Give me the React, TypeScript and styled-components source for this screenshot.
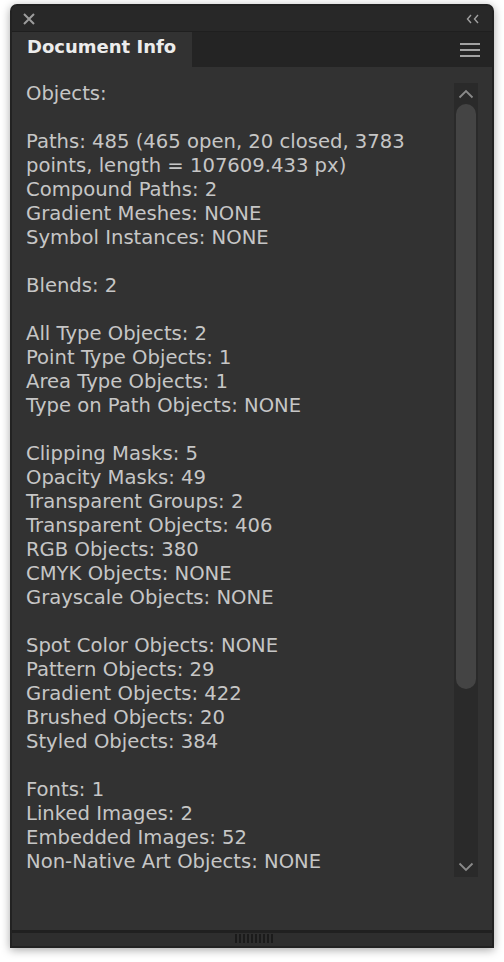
import React from "react";
import styled, { createGlobalStyle } from "styled-components";

const Global = createGlobalStyle`
  html, body { margin: 0; padding: 0; background: #ffffff; }
  #root { width: 504px; height: 962px; }
`;

const Panel = styled.div`
  position: relative;
  margin: 4px 0 0 10px;
  width: 484px;
  height: 944px;
  box-sizing: border-box;
  border: 2px solid #222222;
  border-radius: 7px 7px 0 0;
  background: #323232;
  box-shadow: 0 2px 10px rgba(0, 0, 0, 0.35);
  display: flex;
  flex-direction: column;
  overflow: hidden;
  font-family: "DejaVu Sans", sans-serif;
`;

const TitleBar = styled.div`
  height: 25px;
  background: #282828;
  display: flex;
  align-items: center;
  justify-content: space-between;
  padding: 0 12px 0 10px;
  flex-shrink: 0;
`;

const TabRow = styled.div`
  height: 35px;
  background: #242424;
  border-top: 1px solid #1f1f1f;
  display: flex;
  align-items: stretch;
  justify-content: space-between;
  flex-shrink: 0;
`;

const Tab = styled.div`
  width: 180px;
  background: #323232;
  color: #ececec;
  font-weight: bold;
  font-size: 18px;
  display: flex;
  align-items: center;
  padding-left: 15px;
  box-sizing: border-box;
  padding-bottom: 6px;
`;

const MenuButton = styled.div`
  display: flex;
  align-items: center;
  padding-right: 12px;
`;

const Content = styled.div`
  flex: 1;
  display: flex;
  padding: 15px 14px 0 14px;
  min-height: 0;
`;

const TextColumn = styled.div`
  flex: 1;
  color: #c6c6c6;
  font-size: 19.6px;
  line-height: 24px;
  padding-right: 8px;
`;

const Line = styled.div`
  min-height: 24px;
  white-space: pre-wrap;
`;

const Scrollbar = styled.div`
  width: 24px;
  height: 794px;
  margin-top: 1px;
  background: #2a2a2a;
  display: flex;
  flex-direction: column;
  align-items: center;
  flex-shrink: 0;
`;

const ScrollArrow = styled.div`
  height: 21px;
  display: flex;
  align-items: center;
  justify-content: center;
  flex-shrink: 0;
`;

const Thumb = styled.div`
  width: 20px;
  height: 585px;
  background: #444444;
  border-radius: 10px;
  flex-shrink: 0;
`;

const Spacer = styled.div`
  flex: 1;
`;

const Footer = styled.div`
  height: 13px;
  border-top: 3px solid #202020;
  background: #2e2e2e;
  display: flex;
  justify-content: center;
  align-items: flex-start;
  flex-shrink: 0;
  margin: 0;
`;

const Grip = styled.div`
  display: flex;
  gap: 2px;
  margin-top: 1px;
  margin-left: 4px;
`;

const GripLine = styled.div`
  width: 2px;
  height: 9px;
  background: #1b1b1b;
`;

const lines: string[] = [
  "Objects:",
  "",
  "Paths: 485 (465 open, 20 closed, 3783 points, length = 107609.433 px)",
  "Compound Paths: 2",
  "Gradient Meshes: NONE",
  "Symbol Instances: NONE",
  "",
  "Blends: 2",
  "",
  "All Type Objects: 2",
  "Point Type Objects: 1",
  "Area Type Objects: 1",
  "Type on Path Objects: NONE",
  "",
  "Clipping Masks: 5",
  "Opacity Masks: 49",
  "Transparent Groups: 2",
  "Transparent Objects: 406",
  "RGB Objects: 380",
  "CMYK Objects: NONE",
  "Grayscale Objects: NONE",
  "",
  "Spot Color Objects: NONE",
  "Pattern Objects: 29",
  "Gradient Objects: 422",
  "Brushed Objects: 20",
  "Styled Objects: 384",
  "",
  "Fonts: 1",
  "Linked Images: 2",
  "Embedded Images: 52",
  "Non-Native Art Objects: NONE",
];

export default function App() {
  return (
    <>
      <Global />
      <Panel>
        <TitleBar>
          <svg width="14" height="14" viewBox="0 0 14 14">
            <path d="M2 2 L12 12 M12 2 L2 12" stroke="#9c9c9c" strokeWidth="2" strokeLinecap="butt" />
          </svg>
          <svg width="14" height="10" viewBox="0 0 14 10">
            <path d="M5 1 L1.5 5 L5 9 M12 1 L8.5 5 L12 9" stroke="#a0a0a0" strokeWidth="1.4" fill="none" />
          </svg>
        </TitleBar>
        <TabRow>
          <Tab>Document Info</Tab>
          <MenuButton>
            <svg width="20" height="16" viewBox="0 0 20 16">
              <path d="M0 2 H20 M0 8 H20 M0 14 H20" stroke="#a2a2a2" strokeWidth="2" />
            </svg>
          </MenuButton>
        </TabRow>
        <Content>
          <TextColumn>
            {lines.map((l, i) => (
              <Line key={i}>{l}</Line>
            ))}
          </TextColumn>
          <Scrollbar>
            <ScrollArrow>
              <svg width="16" height="10" viewBox="0 0 16 10">
                <path d="M1.5 8.5 L8 2 L14.5 8.5" stroke="#8a8a8a" strokeWidth="1.8" fill="none" />
              </svg>
            </ScrollArrow>
            <Thumb />
            <Spacer />
            <ScrollArrow>
              <svg width="16" height="10" viewBox="0 0 16 10">
                <path d="M1.5 1.5 L8 8 L14.5 1.5" stroke="#8a8a8a" strokeWidth="1.8" fill="none" />
              </svg>
            </ScrollArrow>
          </Scrollbar>
        </Content>
        <Footer>
          <Grip>
            {Array.from({ length: 10 }).map((_, i) => (
              <GripLine key={i} />
            ))}
          </Grip>
        </Footer>
      </Panel>
    </>
  );
}
